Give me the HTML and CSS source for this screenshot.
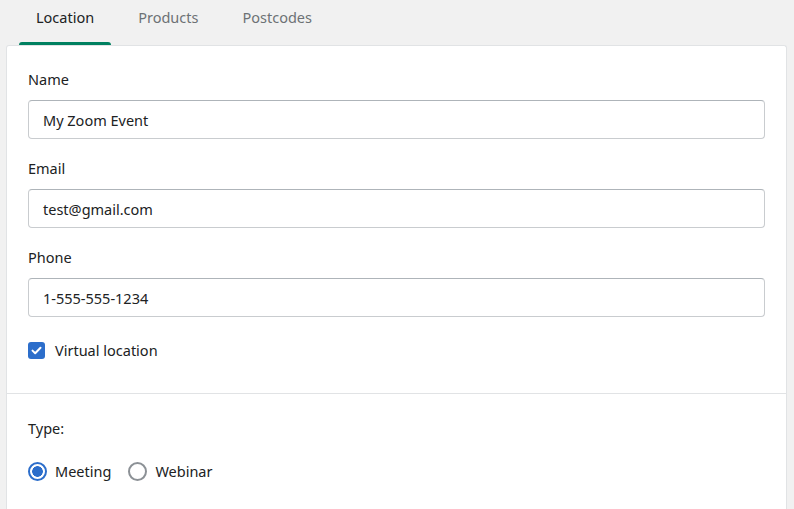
FILE: index.html
```html
<!DOCTYPE html>
<html>
<head>
<meta charset="utf-8">
<link rel="stylesheet" href="styles.css">
</head>
<body>
<div class="page">
  <nav class="tabs">
    <div class="tab active">Location</div>
    <div class="tab">Products</div>
    <div class="tab">Postcodes</div>
  </nav>
  <div class="card">
    <section class="section">
      <div class="field">
        <div class="label">Name</div>
        <div class="input">My Zoom Event</div>
      </div>
      <div class="field">
        <div class="label">Email</div>
        <div class="input">test@gmail.com</div>
      </div>
      <div class="field">
        <div class="label">Phone</div>
        <div class="input">1-555-555-1234</div>
      </div>
      <label class="check">
        <span class="box"><svg width="11" height="9" viewBox="0 0 11 9"><path d="M1.5 4.6 L4.2 7.2 L9.5 1.8" fill="none" stroke="#fff" stroke-width="2" stroke-linecap="round" stroke-linejoin="round"/></svg></span>
        <span>Virtual location</span>
      </label>
    </section>
    <section class="section second">
      <div class="label type">Type:</div>
      <div class="radios">
        <label class="radio"><span class="dot on"></span><span>Meeting</span></label>
        <label class="radio"><span class="dot"></span><span>Webinar</span></label>
      </div>
    </section>
  </div>
</div>
</body>
</html>
```
FILE: styles.css
```css
* { box-sizing: border-box; }
html, body { margin: 0; padding: 0; }
body {
  background: #f1f1f1;
  font-family: "Noto Sans", "Open Sans", sans-serif;
  font-size: 14.5px;
  line-height: 20px;
  color: #202223;
  width: 794px;
  height: 509px;
  overflow: hidden;
}
.page { padding: 0 7px 0 6px; }
.tabs {
  display: flex;
  gap: 10px;
  padding-left: 13px;
  height: 45px;
}
.tab {
  padding: 7px 17px 0;
  color: #6d7175;
  height: 45px;
  position: relative;
}
.tab.active { color: #202223; }
.tab.active::after {
  content: "";
  position: absolute;
  left: 0; right: 0; bottom: 0;
  height: 3px;
  background: #008060;
  border-radius: 3px 3px 0 0;
}
.card {
  background: #fff;
  border: 1px solid #e1e3e5;
  border-bottom: none;
  border-radius: 3px 3px 0 0;
  height: 470px;
}
.section {
  padding: 23px 21px 33px;
}
.section.second {
  border-top: 1px solid #e1e3e5;
  padding-top: 24px;
}
.field { margin-bottom: 19px; }
.field:last-of-type { margin-bottom: 23px; }
.label { margin-bottom: 11px; }
.input {
  height: 39px;
  border: 1px solid #c9cccf;
  border-top-color: #aeb4b9;
  border-radius: 4px;
  padding: 9px 14px;
  color: #202223;
}
.check {
  display: flex;
  align-items: flex-start;
  gap: 10px;
  height: 20px;
}
.box {
  width: 17px; height: 17px;
  margin-top: 2px;
  border-radius: 3px;
  background: #2c6ecb;
  display: flex; align-items: center; justify-content: center;
}
.type { margin-bottom: 23px; }
.radios { display: flex; gap: 17px; }
.radio { display: flex; align-items: flex-start; gap: 8px; height: 20px; }
.dot {
  width: 19px; height: 19px;
  margin-top: 1px;
  border-radius: 50%;
  border: 2px solid #8c9196;
  background: #fff;
}
.dot.on {
  border-color: #2c6ecb;
  background: radial-gradient(circle, #2c6ecb 0 5px, #fff 5.6px);
}
```
